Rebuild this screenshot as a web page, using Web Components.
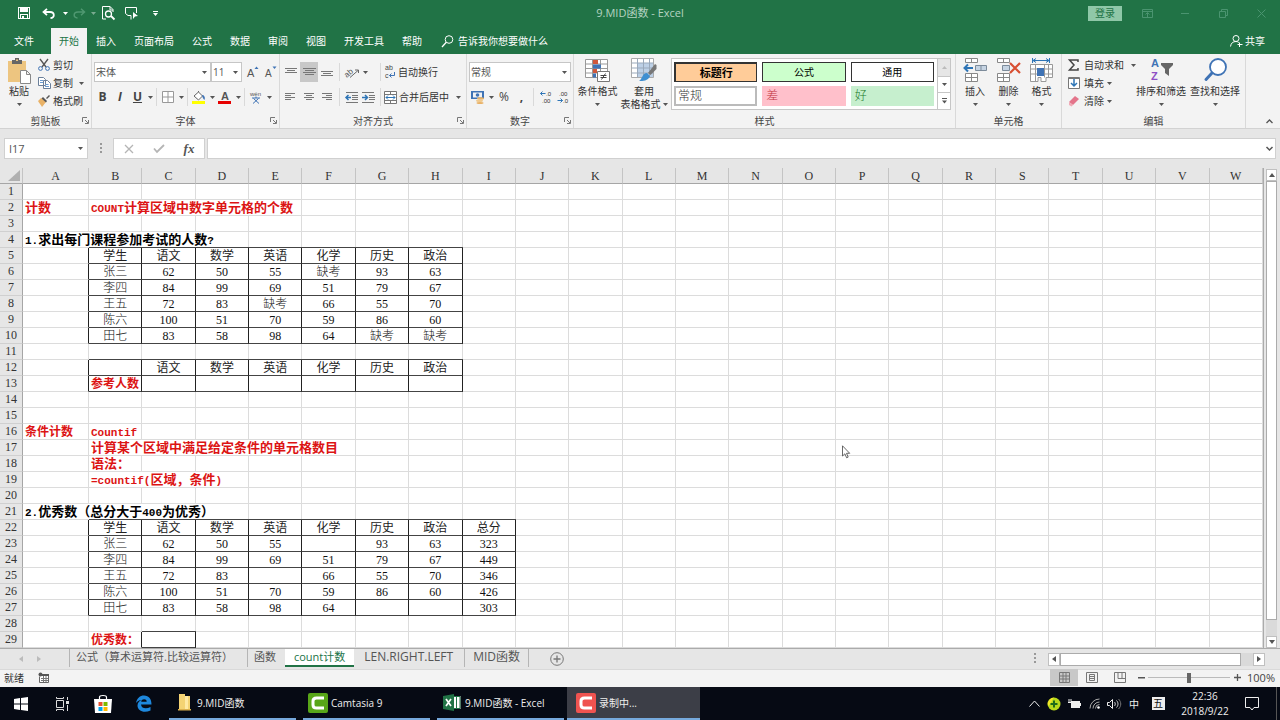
<!DOCTYPE html>
<html lang="zh-CN">
<head>
<meta charset="utf-8">
<meta name="viewport" content="width=device-width, initial-scale=1">
<title>9.MID函数 - Excel</title>
<style>
html, body { margin: 0; }
body { font: 10px/14px "Open Sans", "Noto Sans CJK SC", sans-serif; color: #333; background: #e6e6e6; }
</style>
</head>
<body>
<excel-app></excel-app>
<script>
const BASE = `
*, *::before { box-sizing: border-box; }
:host { display: block; box-sizing: border-box; }
button, input, select { font: inherit; color: inherit; margin: 0; padding: 0; border: 0; background: none; border-radius: 0; appearance: none; }
button { display: flex; align-items: center; justify-content: center; white-space: nowrap; }
:focus-visible { outline: 1px solid #217346; }
`;

function define(name, css, html, setup) {
  customElements.define(name, class extends HTMLElement {
    constructor() {
      super();
      const root = this.attachShadow({ mode: 'open' });
      root.innerHTML = `<style>${BASE}${css}</style>${html}`;
    }
    connectedCallback() { if (setup) setup(this, this.shadowRoot); }
  });
}

/* Each icon: [width, height, svg body] */
const G = 'stroke="#777" fill="none"';
const lines = (list) => `<path stroke="#777" d="${list.map(([x, y, w]) => `M${x} ${y}.5h${w}`).join('')}"/>`;
const ICONS = {
  caret: [5, 3, '<path fill="#555" d="M0 0h5L2.500 3z"/>'],
  caretw: [5, 3, '<path fill="#fff" d="M0 0h5L2.500 3z"/>'],
  launch: [7, 7, '<path stroke="#777" fill="none" d="M.5 5V.5H5M3 3l3 3M6.500 3v3.500H3"/>'],
  save: [12, 12, '<path fill="#fff" fill-rule="evenodd" d="M0 0h12v12H0zM1 1v10h1V7h8v4h1V1h-1v4H2V1zM3 8v3h1V9h2v2h3V8z"/>'],
  undo: [13, 11, '<path fill="none" stroke="#fff" stroke-width="1.800" d="M5 .8L1.500 4 5 7.200M2 4h6c5 0 5 6 .5 6"/>'],
  redo: [13, 11, '<path fill="none" stroke="#4f9871" stroke-width="1.500" d="M8 .8L11.500 4 8 7.200M11 4H5C0 4 0 10 4.500 10"/>'],
  preview: [13, 14, '<path fill="none" stroke="#fff" d="M4 13H.5V.5H8l3 3V6M8 .5V4h3"/><circle cx="6.500" cy="8" r="3" fill="none" stroke="#fff" stroke-width="1.300"/><path stroke="#fff" stroke-width="1.800" d="M9 10l3.500 3.500"/>'],
  touch: [14, 13, '<path fill="none" stroke="#fff" d="M6 8.500H3L.5 6.500V.5h11V6M6 8.500v4"/><path fill="#fff" d="M8 5l5 4-3 .5L8 12z"/>'],
  more: [5, 5, '<path fill="#fff" d="M0 0h5v1H0zM0 2h5L2.500 5z"/>'],
  ribbonopt: [11, 9, '<path fill="none" stroke="#4b9470" d="M.5 .5h10v8H.5zM.5 2.500h10M5.500 8V4M3.500 5.500l2-2 2 2"/>'],
  min: [8, 1, '<path stroke="#4b9470" d="M0 .5h8"/>'],
  restore: [9, 9, '<path fill="none" stroke="#4b9470" d="M.5 2.500h6v6h-6zM2.500 2V.5h6v6H7"/>'],
  close: [9, 9, '<path stroke="#4b9470" d="M.5 .5l8 8M8.500 .5l-8 8"/>'],
  search: [13, 13, '<circle cx="8" cy="4.500" r="3.800" fill="none" stroke="#fff"/><path stroke="#fff" stroke-width="1.300" d="M5.300 7.300L1 12"/>'],
  share: [13, 12, '<circle cx="6" cy="3.500" r="3" fill="none" stroke="#fff"/><path fill="none" stroke="#fff" d="M.5 11.500C1 8 3 6.500 6 6.500c1 0 2 .3 2.800 1M9.500 7.500v4.500M7.500 9.500h5"/>'],
  paste: [24, 26, '<path fill="#edc580" d="M1 3h18v21H1z"/><path fill="#666" d="M5 6V2h3V0h4v2h3v4z"/><path fill="#edc580" d="M9 1.500h2v1.500H9z"/><path fill="#fff" stroke="#888" d="M13.500 12.500h6l4 4v9h-10zM19.500 12.500v4h4"/>'],
  cut: [12, 12, '<path stroke="#555" stroke-width="1.300" fill="none" d="M2 0l6 8M10 0L4 8"/><circle cx="2.500" cy="9.500" r="1.900" fill="none" stroke="#3f73b5"/><circle cx="9.500" cy="9.500" r="1.900" fill="none" stroke="#3f73b5"/>'],
  copy: [13, 12, '<path fill="#fff" stroke="#6b7f99" d="M.5 .5h5l2 2v6h-7zM5.500 3.500h4l3 3v5h-7z"/><path stroke="#6b9bd1" d="M2 3.500h3M2 5.500h3M7 7.500h3.500M7 9.500h4"/>'],
  brush: [12, 12, '<path fill="#e9b267" d="M0 6l3-3 5 4-4 5c-1-2-3-4-4-6z"/><path fill="#555" d="M5 2l4 4-1 1.500L3.500 3.500zM8 3l3-3 1 1-3 3z"/>'],
  fontup: [12, 12, '<text x="0" y="11" font-size="11" fill="#555">A</text><path fill="#3f73b5" d="M7.500 3L9.500 .5l2 2.500z"/>'],
  fontdn: [12, 12, '<text x="0" y="11" font-size="10" fill="#555">A</text><path fill="#3f73b5" d="M7.500 .5h4L9.500 3z"/>'],
  border: [12, 12, '<path fill="#fff" stroke="#999" d="M.5 .5h11v11H.5zM6 .5v11M.5 6h11"/>'],
  fill: [14, 13, '<path fill="#fff" stroke="#666" d="M2 5l4.500-4 4 4-4 4zM6.500 1V0"/><path fill="#3f73b5" d="M10 4c2 0 3.500 2 2.500 5-1-1-2-2-2.500-5z"/><path fill="#ff0" d="M0 10h13v3H0z"/>'],
  color: [14, 13, '<text x="3" y="9" font-size="11" font-weight="600" fill="#555">A</text><path fill="#e60000" d="M0 10h13v3H0z"/>'],
  wen: [12, 13, '<text x="0" y="5" font-size="6" fill="#555">wén</text><path fill="none" stroke="#3f73b5" d="M2 7h8M6 5.500V7M3 12.500l5.500-5M9 12.500l-5.500-5"/>'],
  vtop: [13, 12, lines([[0, 2, 12], [2, 4, 8], [0, 6, 12]])],
  vmid: [13, 12, lines([[0, 2, 13], [2, 4, 9], [0, 6, 13], [2, 8, 9]])],
  vbot: [13, 12, lines([[0, 5, 12], [2, 7, 8], [0, 9, 12]])],
  left: [12, 10, lines([[0, 1, 10], [0, 3, 6], [0, 5, 10], [0, 7, 6]])],
  center: [12, 10, lines([[1, 1, 10], [3, 3, 6], [1, 5, 10], [3, 7, 6]])],
  right: [12, 10, lines([[1, 1, 10], [5, 3, 6], [1, 5, 10], [5, 7, 6]])],
  orient: [13, 12, '<text x="-1" y="9" font-size="8" fill="#555" transform="rotate(-40 4 8)">ab</text><path fill="none" stroke="#666" d="M4 11.500l8-7M9 4h3.500v3"/>'],
  outdent: [13, 11, '<path stroke="#777" d="M1 .5h12M7 3.500h6M7 5.500h6M7 7.500h6M1 10.500h12"/><path stroke="#2e75b6" stroke-width="1.500" fill="none" d="M6 5.500H1M3.500 3L1 5.500 3.500 8"/>'],
  indent: [13, 11, '<path stroke="#777" d="M0 .5h12M7 3.500h6M7 5.500h6M7 7.500h6M0 10.500h12"/><path stroke="#2e75b6" stroke-width="1.500" fill="none" d="M0 5.500h5M3 3l2.500 2.500L3 8"/>'],
  wrap: [12, 12, '<text x="1" y="4" font-size="7" fill="#444">ab</text><text x="1" y="12" font-size="7" fill="#444">c</text><path stroke="#3f73b5" fill="none" d="M10.500 6v3.500H5.500M7.500 7.500l-2 2 2 2"/>'],
  merge: [13, 13, '<path fill="#fff" stroke="#777" d="M.5 .5h12v12H.5zM.5 3.500h12M.5 9.500h12M6.500 .5v3M6.500 9.500v3"/><path stroke="#2e75b6" fill="none" d="M2 6.500h9M4 4.500l-2 2 2 2M9 4.500l2 2-2 2"/>'],
  money: [14, 13, '<path fill="#3f73b5" fill-rule="evenodd" d="M0 0h13v8H0zM2 1.500v5h9v-5z"/><circle cx="6.500" cy="4" r="1.800" fill="#3f73b5"/><ellipse cx="9.500" cy="7.500" rx="3.500" ry="1.200" fill="#e9b267"/><ellipse cx="8.500" cy="9.800" rx="3.500" ry="1.200" fill="#f0c98d"/><ellipse cx="9" cy="12" rx="3.500" ry="1" fill="#e9b267"/>'],
  incdec: [12, 12, '<path stroke="#2e75b6" fill="none" d="M5.500 2.500H.5M2.500 .5l-2 2 2 2"/><text x="6" y="5" font-size="6" fill="#333">.0</text><text x="2" y="12" font-size="6" fill="#333">.00</text>'],
  decdec: [12, 12, '<path stroke="#2e75b6" fill="none" d="M.5 9.500h5M3.500 7.500l2 2-2 2"/><text x="2" y="5" font-size="6" fill="#333">.00</text><text x="6" y="12" font-size="6" fill="#333">.0</text>'],
  cond: [26, 25, '<path fill="#fff" stroke="#999" d="M.5 1.500h22v18H.5zM.5 6h22M.5 10.500h22M.5 15h22M7.500 1.500v18M15.500 1.500v18"/><path fill="#d0583b" d="M8 2h5v4H8zM8 11h4v4H8z"/><path fill="#3f73b5" d="M8 6.500h8v4H8zM8 15.500h3v4H8z"/><path fill="#fff" stroke="#777" d="M12.500 13.500h12v10h-12z"/><path stroke="#444" d="M15.500 17.500h6M15.500 19.500h6M20.500 15.500l-4 6"/>'],
  tablefmt: [26, 25, '<path fill="#fff" stroke="#aaa" d="M.5 .5h22v19H.5z"/><path fill="#bdd0e6" d="M6 5h16v14H6z"/><path stroke="#9aa9bb" d="M.5 5h22M.5 10h22M.5 15h22M6.500 .5v19M12.500 .5v19M18.500 .5v19"/><path fill="#777" d="M17 15l7-9 1.500 1v4l-6 6z"/><path fill="#3f8fd1" d="M8 23c3-1 3-8 8-8l3 3c-2 5-7 5-11 5z"/>'],
  gup: [5, 3, '<path fill="#bbb" d="M0 3h5L2.500 0z"/>'],
  gmore: [7, 6, '<path fill="#555" d="M1 0h5v1H1zM1 2.500h5L3.500 5.500z"/>'],
  insert: [24, 24, '<path fill="#fff" stroke="#888" d="M2.500 .5h12v4h-12zM8.500 .5v4M2.500 15.500h12v8h-12zM8.500 15.500v8M2.500 19.500h12"/><path fill="#c6d4e3" stroke="#7c8b9a" d="M12.500 7.500h11v5h-11zM18 7.500v5"/><path stroke="#2e75b6" stroke-width="2" fill="none" d="M10 10H2M5 6.500L1.500 10 5 13.500"/>'],
  remove: [24, 24, '<path fill="#fff" stroke="#888" d="M.5 .5h12v4H.5zM6.500 .5v4M.5 15.500h12v8H.5zM6.500 15.500v8M.5 19.500h12"/><path fill="#c6d4e3" stroke="#7c8b9a" d="M5.500 7.500h7v5h-7z"/><path stroke="#d84f32" stroke-width="2.200" fill="none" d="M13 5l10 10M23 5L13 15"/>'],
  format: [24, 25, '<path stroke="#2e75b6" fill="none" d="M2.500 0v5M19.500 0v5M3 2.500h16M6 .5l-3 2 3 2M16 .5l3 2-3 2"/><path fill="#fff" stroke="#999" d="M.5 6.500h22v13H16v4h-5v-4H8v4H.5zM.5 11h22M.5 16h22M5.500 6.500v17M14.500 6.500v13M18.500 6.500v13"/><path fill="#3f73b5" d="M7 10h7v8H7z"/>'],
  sum: [11, 12, '<path stroke="#444" stroke-width="1.500" fill="none" d="M10 3V1H1.500l4.500 5-4.500 5H10V9"/>'],
  filldown: [12, 12, '<path fill="#fff" stroke="#777" d="M.5 .5h11v11H.5z"/><path stroke="#2e75b6" stroke-width="1.500" fill="none" d="M6 2v7M3 6l3 3 3-3"/><path stroke="#777" d="M1 1.500h10"/>'],
  eraser: [12, 12, '<path fill="#e4758b" d="M1 7l6-6 4 3-6 6z"/><path fill="#f0a9b6" d="M1 7l4 3-1.500 1.500L1 10z"/>'],
  sort: [25, 24, '<text x="2" y="9" font-size="11" font-weight="bold" fill="#3f73b5">A</text><text x="2" y="22" font-size="11" font-weight="bold" fill="#8e4fc4">Z</text><path fill="#666" d="M12 5h12v2l-4 4v7l-4-3v-4l-4-4z"/>'],
  find: [25, 24, '<circle cx="15" cy="9" r="8" fill="#fff" stroke="#3f73b5" stroke-width="1.800"/><path stroke="#3f73b5" stroke-width="3" stroke-linecap="round" d="M9 15l-6 6.500"/>'],
  up: [7, 5, '<path fill="none" stroke="#555" stroke-width="1.300" d="M.5 4l3-3 3 3"/>'],
  chev: [7, 5, '<path fill="none" stroke="#555" stroke-width="1.500" d="M.5 1l3 3 3-3"/>'],
  x: [10, 10, '<path stroke="#b5b5b5" stroke-width="1.300" d="M1 1l8 8M9 1L1 9"/>'],
  check: [12, 9, '<path fill="none" stroke="#b5b5b5" stroke-width="1.800" d="M1 4.500L4 8l7-7"/>'],
  dots: [2, 10, '<path fill="#999" d="M0 0h2v2H0zM0 4h2v2H0zM0 8h2v2H0z"/>'],
  corner: [12, 11, '<path fill="#b0b0b0" d="M12 0v11H0z"/>'],
  tu: [6, 4, '<path fill="#555" d="M0 4h6L3 0z"/>'],
  td: [6, 4, '<path fill="#555" d="M0 0h6L3 4z"/>'],
  tl: [4, 6, '<path fill="#555" d="M4 0v6L0 3z"/>'],
  tr: [4, 6, '<path fill="#555" d="M0 0v6l4-3z"/>'],
  tlg: [4, 6, '<path fill="#bbb" d="M4 0v6L0 3z"/>'],
  trg: [4, 6, '<path fill="#bbb" d="M0 0v6l4-3z"/>'],
  plus: [14, 14, '<circle cx="7" cy="7" r="6.300" fill="none" stroke="#777"/><path stroke="#777" stroke-width="1.300" d="M3.500 7h7M7 3.500v7"/>'],
  macro: [11, 11, `<path fill="#fff" stroke="#666" d="M2.500 2.500h8v8h-9v-6"/><circle cx="2.500" cy="2.500" r="2" fill="#555"/><path fill="#555" d="M4 2h7v2H4z"/><path stroke="#777" d="M3 6.500h7M3 8.500h7M5.500 4v6M8 4v6"/>`],
  vnormal: [11, 11, `<path ${G} d="M.5 .5h10v10H.5zM.5 4h10M.5 7h10M4 .5v10M7 .5v10"/>`],
  vlayout: [12, 11, `<path ${G} d="M.5 .5h11v10H.5zM3.500 2.500h5v6h-5zM4 4.500h4M4 6.500h4"/>`],
  vbreak: [12, 11, `<path ${G} d="M.5 .5h11v10H.5zM4 .5v6h4v-6M8 6.500h3"/>`],
  minus: [7, 2, '<path fill="#555" d="M0 0h7v1.500H0z"/>'],
  zplus: [7, 7, '<path stroke="#555" stroke-width="1.300" d="M0 3.500h7M3.500 0v7"/>'],
  win: [14, 14, '<path fill="#fff" d="M0 2l6-1v5.500H0zM7 .9L14 0v6.500H7zM0 7.500h6V13l-6-1zM7 7.500h7V14l-7-1z"/>'],
  taskview: [14, 14, '<path fill="none" stroke="#ddd" d="M1.500 3.500h7v7h-7zM1.500 0v1.500h7V0M1.500 14v-1.500h7V14M12.500 0v3M12.500 8v6"/><path fill="#ddd" d="M11 4h3v3h-3z"/>'],
  store: [20, 20, '<path fill="none" stroke="#fff" stroke-width="1.200" d="M6.500 6V3C6.500 1 13.500 1 13.500 3v3"/><path fill="#fff" d="M1 5h18l-1 14H2z"/><path fill="#e8502f" d="M5.500 8h4v4h-4z"/><path fill="#7fba00" d="M10.500 8h4v4h-4z"/><path fill="#00a4ef" d="M5.500 13h4v4h-4z"/><path fill="#ffb900" d="M10.500 13h4v4h-4z"/>'],
  edge: [17, 17, '<path fill="#1e88dd" fill-rule="evenodd" d="M1 8C2 3 5 .5 9 .5c5 0 7.500 3.500 7.500 9H6c.5 4 5 5 9.500 2.500V15.500C9 18.500 2.500 16 2.500 10.500c0-3 2-4.500 4-5.500C4 5 2 6.500 1 8zM6.200 6.700h5.500C11.700 3.500 6.600 3.500 6.200 6.700z"/>'],
  folder: [13, 17, '<path fill="#f4d373" d="M1 0h6v2h5v13H1z"/><path fill="#ffe9a3" d="M7 2h3v14H7z"/><path fill="#dcb14d" d="M0 15h13v1.500H0z"/>'],
  camg: [20, 20, '<rect width="20" height="20" rx="2" fill="#58a618"/><path fill="none" stroke="#fff" stroke-width="3" d="M16 5H8.500C6 5 5 6 5 8v4c0 2 1 3 3.500 3H16"/>'],
  camr: [20, 20, '<rect width="20" height="20" rx="2" fill="#ef5350"/><path fill="none" stroke="#fff" stroke-width="3" d="M16 5H8.500C6 5 5 6 5 8v4c0 2 1 3 3.500 3H16"/>'],
  xl: [18, 17, '<path fill="#fff" d="M9 2h8.500v13H9z"/><path stroke="#217346" fill="none" d="M10 2.500h7v12h-7M13.500 3v11"/><path fill="#217346" d="M0 2l11-2v17L0 15z"/><path stroke="#fff" stroke-width="1.700" d="M3 5l5 7M8 5l-5 7"/>'],
  tup: [11, 7, '<path fill="none" stroke="#eee" d="M.5 6.500l5-5.500 5 5.500"/>'],
  guard: [14, 14, '<circle cx="7" cy="7" r="6.500" fill="#b8d91c"/><path fill="#f3e62a" d="M1 9a6.500 6.500 0 0 1 6-8.500C4 4 5 6 1 9z"/><path stroke="#1f6b1a" stroke-width="2" d="M3.500 7h7M7 3.500v7"/>'],
  battery: [13, 9, '<path fill="#eee" d="M3 2h9v2h1v3h-1v2H3z"/><path fill="none" stroke="#eee" d="M1 0v3M3 0v3M0 3.500h4"/>'],
  wifi: [11, 11, '<path fill="none" stroke="#aaa" d="M1 10.500A9.500 9.500 0 0 1 10.500 1M4 10.500A6.500 6.500 0 0 1 10.500 4M6.500 10.500a4 4 0 0 1 4-4"/><circle cx="9.500" cy="9.500" r="1.300" fill="#fff"/>'],
  sound: [14, 12, '<path fill="none" stroke="#eee" d="M.5 4.500h2l3-3v9l-3-3h-2z"/><path fill="none" stroke="#ccc" d="M7.500 4c1 1 1 3 0 4M9.500 2.500c2 2 2 5 0 7"/><path fill="none" stroke="#777" d="M11.500 1c3 3 3 7 0 10"/>'],
  action: [14, 14, '<path fill="none" stroke="#eee" d="M.5 .5h13v10H9l-2 2.500-2-2.500H.5z"/>'],
  pointer: [9, 14, '<path fill="#fff" stroke="#444" stroke-width=".8" d="M.5 .8v10.200l2.400-2.200 1.700 4 1.600-.7-1.700-3.800h3.200z"/>'],
};

customElements.define('ui-icon', class extends HTMLElement {
  constructor() { super(); this.attachShadow({ mode: 'open' }); }
  connectedCallback() {
    const [w, h, body] = ICONS[this.getAttribute('name')];
    this.shadowRoot.innerHTML = `<style>:host{display:inline-flex;flex:none}svg{display:block;font-family:"Liberation Sans",sans-serif;overflow:visible}</style>
      <svg width="${w}" height="${h}" viewBox="0 0 ${w} ${h}" aria-hidden="true">${body}</svg>`;
  }
});
const ic = (n) => `<ui-icon name="${n}"></ui-icon>`;

define('title-bar', `
  :host { display: grid; grid-template-columns: 1fr auto 1fr; align-items: center; height: 28px; padding-bottom: 2px; background: #217346; color: #b5d3c2; font-size: 11px; }
  .quick { display: flex; align-items: center; padding-left: 14px; }
  .quick button { height: 24px; }
  .w20 { width: 20px; } .w25 { width: 25px; } .w8 { width: 8px; } .w22 { width: 22px; }
  .dim { opacity: .4; }
  .win { display: flex; align-items: center; justify-content: flex-end; }
  .win button { width: 38px; height: 24px; }
  .win .login { width: 34px; height: 15px; margin-right: 6px; background: #8fc7a8; color: #217346; font-size: 10px; }
`, `
  <div class="quick">
    <button class="w20" aria-label="保存">${ic('save')}</button>
    <button class="w25" aria-label="撤消" style="margin-left:2px">${ic('undo')}</button><button class="w8" aria-label="撤消列表">${ic('caretw')}</button>
    <button class="w20" aria-label="恢复">${ic('redo')}</button><button class="w8 dim" aria-label="恢复列表">${ic('caretw')}</button>
    <button class="w22" aria-label="打印预览">${ic('preview')}</button>
    <button class="w25" aria-label="触摸/鼠标模式">${ic('touch')}</button>
    <button class="w22" aria-label="自定义快速访问工具栏">${ic('more')}</button>
  </div>
  <div>9.MID函数 - Excel</div>
  <div class="win">
    <button class="login">登录</button>
    <button aria-label="功能区显示选项">${ic('ribbonopt')}</button>
    <button aria-label="最小化">${ic('min')}</button>
    <button aria-label="还原">${ic('restore')}</button>
    <button aria-label="关闭">${ic('close')}</button>
  </div>`);

define('ribbon-tabs', `
  :host { display: flex; align-items: stretch; height: 26px; padding-right: 15px; background: #217346; color: #fff; }
  nav { display: flex; padding-left: 5px; }
  nav button { padding: 0 9px; }
  nav .file { padding-right: 17px; }
  nav .on { padding: 0 8px; background: #f3f3f3; color: #217346; }
  .tell { gap: 4px; margin-left: 10px; }
  .share { gap: 2px; margin-left: auto; }
`, `
  <nav aria-label="功能区选项卡">
    <button class="file">文件</button><button class="on">开始</button><button>插入</button><button>页面布局</button><button>公式</button><button>数据</button><button>审阅</button><button>视图</button><button>开发工具</button><button>帮助</button>
  </nav>
  <button class="tell">${ic('search')}告诉我你想要做什么</button>
  <button class="share">${ic('share')}共享</button>`);

define('ribbon-group', `
  :host { display: flex; flex-direction: column; flex: none; border-right: 1px solid #d9d9d9; }
  .body { display: flex; flex: 1; min-height: 0; padding: 0 2px; }
  footer { display: grid; grid-template-columns: 12px 1fr 12px; align-items: center; height: 15px; text-align: center; color: #444; }
`, `<div class="body"><slot></slot></div><footer><span></span><span class="name"></span><button></button></footer>`,
(el, root) => {
  root.querySelector('.name').textContent = el.getAttribute('label');
  const b = root.querySelector('button');
  if (el.hasAttribute('launcher')) { b.innerHTML = ic('launch'); b.setAttribute('aria-label', el.getAttribute('label') + '设置'); }
  else b.remove();
});

define('big-button', `
  button { flex-direction: column; justify-content: flex-start; width: 100%; height: 58px; padding-top: 4px; line-height: 13px; }
  .pic { height: 27px; display: flex; justify-content: center; }
  .drop { display: flex; justify-content: center; height: 12px; align-items: center; }
  :host([inline]) .drop { display: none; }
  .two { display: none; align-items: center; gap: 2px; }
  :host([inline]) .two { display: flex; }
`, `<button><span class="pic"></span><span class="t"></span><span class="two"></span><span class="drop">${ic('caret')}</span></button>`,
(el, root) => {
  root.querySelector('.pic').innerHTML = ic(el.getAttribute('icon'));
  root.querySelector('.t').textContent = el.getAttribute('label');
  if (el.hasAttribute('inline')) root.querySelector('.two').innerHTML = el.getAttribute('inline') + ic('caret');
});

define('drop-down', `
  :host { display: block; position: relative; height: 20px; border: 1px solid #c6c6c6; background: #fff; color: #555; }
  select { width: 100%; height: 18px; padding-left: 1px; }
  ui-icon { position: absolute; right: 3px; top: 8px; pointer-events: none; }
`, `<select></select>${ic('caret')}`,
(el, root) => {
  const s = root.querySelector('select');
  s.innerHTML = `<option>${el.getAttribute('value')}</option>`;
  s.setAttribute('aria-label', el.getAttribute('label'));
});

define('excel-ribbon', `
  :host { display: flex; height: 75px; background: #f3f3f3; border-bottom: 1px solid #d2d2d2; }
  .rows { display: flex; flex-direction: column; padding-top: 8px; gap: 5px; flex: 1; }
  .row { display: flex; align-items: center; height: 20px; }
  .row button { height: 20px; }
  .b { width: 18px; } .c { width: 8px; } .n { width: 17px; }
  .gap2 { gap: 2px; }
  .sep { width: 1px; height: 18px; margin: 0 3px; background: #d9d9d9; }
  .tight .sep { margin: 0 2px; }
  .on { background: #c8c8c8; }
  .glyph { font-size: 12px; color: #444; }
  .small { display: flex; flex-direction: column; padding: 2px 0 0 2px; }
  .small button { justify-content: flex-start; gap: 2px; height: 18px; }
  .edit { width: 70px; padding-left: 4px; }
  .edit button { gap: 3px; }
  .small ui-icon:first-child { width: 13px; }
  .small .d { margin-left: 4px; }
  .g1 { width: 92px; } .g2 { width: 188px; } .g3 { width: 187px; } .g4 { width: 107px; } .g5 { flex: 1; } .g6 { width: 106px; } .g7 { width: 184px; }
  .gallery { flex: 1; display: grid; grid-template-columns: 1fr 13px; height: 52px; margin: 4px 2px 0; border: 1px solid #c6c6c6; background: #fff; }
  .tiles { display: grid; grid-template-columns: repeat(3, 1fr); grid-template-rows: 20px 20px; gap: 4px 5px; padding: 3px 3px 0 2px; }
  .tiles button { color: #000; border: 1px solid #333; }
  .tiles .head { background: #ffcc99; font-size: 11px; font-weight: bold; border-width: 2px 1px 1px 2px; }
  .tiles .calc { background: #ccffcc; }
  .tiles .txt { justify-content: flex-start; padding-left: 3px; font-size: 12px; font-weight: 300; border-color: transparent; }
  .tiles .norm { border: 2px solid #bbb; color: #333; padding-left: 2px; }
  .tiles .bad { background: #ffc0cb; color: #c0303d; } .tiles .good { background: #c6efce; color: #1c7a2a; }
  .scroll { display: grid; grid-template-rows: 1fr 1fr 1fr; border-left: 1px solid #c6c6c6; }
  .scroll button + button { border-top: 1px solid #c6c6c6; }
  .scroll button:first-child { background: #e6e6e6; }
  .end { width: 34px; display: flex; align-items: flex-end; justify-content: center; padding: 0 0 4px 12px; }
`, `
  <ribbon-group class="g1" label="剪贴板" launcher>
    <big-button icon="paste" label="粘贴" style="width:34px"></big-button>
    <div class="small">
      <button>${ic('cut')}剪切</button>
      <button>${ic('copy')}复制<ui-icon class="d" name="caret"></ui-icon></button>
      <button>${ic('brush')}格式刷</button>
    </div>
  </ribbon-group>
  <ribbon-group class="g2" label="字体" launcher>
    <div class="rows">
      <div class="row">
        <drop-down value="宋体" label="字体" style="width:117px"></drop-down><drop-down value="11" label="字号" style="width:31px;margin-right:2px"></drop-down>
        <button class="b" aria-label="增大字号">${ic('fontup')}</button><button class="b" aria-label="减小字号">${ic('fontdn')}</button>
      </div>
      <div class="row tight">
        <button class="n glyph" aria-label="加粗"><b>B</b></button><button class="b glyph" aria-label="倾斜"><i><b>I</b></i></button><button class="n glyph" aria-label="下划线"><u><b>U</b></u></button><button class="c" aria-label="下划线样式">${ic('caret')}</button>
        <span class="sep"></span>
        <button class="b" aria-label="边框">${ic('border')}</button><button class="c" aria-label="边框样式">${ic('caret')}</button>
        <span class="sep"></span>
        <button class="b" aria-label="填充颜色">${ic('fill')}</button><button class="c" aria-label="填充颜色列表">${ic('caret')}</button>
        <button class="b" aria-label="字体颜色">${ic('color')}</button><button class="c" aria-label="字体颜色列表">${ic('caret')}</button>
        <span class="sep"></span>
        <button class="b" aria-label="拼音">${ic('wen')}</button><button class="c" aria-label="拼音选项">${ic('caret')}</button>
      </div>
    </div>
  </ribbon-group>
  <ribbon-group class="g3" label="对齐方式" launcher>
    <div class="rows">
      <div class="row">
        <button class="b" aria-label="顶端对齐">${ic('vtop')}</button><button class="b on" aria-label="垂直居中">${ic('vmid')}</button><button class="b" aria-label="底端对齐">${ic('vbot')}</button>
        <span class="sep"></span>
        <button class="b" aria-label="方向">${ic('orient')}</button><button class="c" aria-label="方向列表">${ic('caret')}</button>
        <span style="width:8px"></span><span class="sep"></span>
        <button class="gap2">${ic('wrap')}自动换行</button>
      </div>
      <div class="row">
        <button class="b" aria-label="左对齐">${ic('left')}</button><button class="b" aria-label="居中">${ic('center')}</button><button class="b" aria-label="右对齐">${ic('right')}</button>
        <span class="sep"></span>
        <button class="n" aria-label="减少缩进量">${ic('outdent')}</button><button class="n" aria-label="增加缩进量">${ic('indent')}</button>
        <span class="sep"></span>
        <button class="gap2">${ic('merge')}合并后居中</button><button class="b" aria-label="合并选项">${ic('caret')}</button>
      </div>
    </div>
  </ribbon-group>
  <ribbon-group class="g4" label="数字" launcher>
    <div class="rows">
      <drop-down value="常规" label="数字格式" style="width:102px"></drop-down>
      <div class="row">
        <button class="b" aria-label="会计数字格式">${ic('money')}</button><button class="c" aria-label="货币列表">${ic('caret')}</button>
        <button class="b glyph" aria-label="百分比样式">%</button><button class="n glyph" aria-label="千位分隔样式"><b>,</b></button>
        <span class="sep"></span>
        <button class="n" aria-label="增加小数位数">${ic('incdec')}</button><button class="n" aria-label="减少小数位数">${ic('decdec')}</button>
      </div>
    </div>
  </ribbon-group>
  <ribbon-group class="g5" label="样式">
    <big-button icon="cond" label="条件格式" style="width:43px"></big-button>
    <big-button icon="tablefmt" label="套用" inline="表格格式" style="width:50px"></big-button>
    <div class="gallery">
      <div class="tiles">
        <button class="head">标题行</button><button class="calc">公式</button><button>通用</button>
        <button class="txt norm">常规</button><button class="txt bad">差</button><button class="txt good">好</button>
      </div>
      <div class="scroll"><button aria-label="上一行">${ic('gup')}</button><button aria-label="下一行">${ic('caret')}</button><button aria-label="其他">${ic('gmore')}</button></div>
    </div>
  </ribbon-group>
  <ribbon-group class="g6" label="单元格">
    <big-button icon="insert" label="插入" style="width:34px"></big-button>
    <big-button icon="remove" label="删除" style="width:33px"></big-button>
    <big-button icon="format" label="格式" style="width:33px"></big-button>
  </ribbon-group>
  <ribbon-group class="g7" label="编辑">
    <div class="small edit">
      <button>${ic('sum')}自动求和<ui-icon class="d" name="caret"></ui-icon></button>
      <button>${ic('filldown')}填充<ui-icon name="caret"></ui-icon></button>
      <button>${ic('eraser')}清除<ui-icon name="caret"></ui-icon></button>
    </div>
    <big-button icon="sort" label="排序和筛选" style="width:54px"></big-button>
    <big-button icon="find" label="查找和选择" style="width:54px"></big-button>
  </ribbon-group>
  <button class="end" aria-label="折叠功能区">${ic('up')}</button>`);

define('formula-bar', `
  :host { display: flex; align-items: center; height: 39px; padding: 0 4px; background: #e6e6e6; }
  .name { display: flex; align-items: center; width: 84px; height: 21px; padding: 0 4px; background: #fff; border: 1px solid #d0d0d0; }
  .name input { flex: 1; min-width: 0; color: #555; font-size: 11px; }
  .grip { width: 25px; text-align: center; }
  .tools { display: flex; height: 21px; background: #fff; border: 1px solid #d0d0d0; margin-right: 2px; }
  .tools button { width: 30px; height: 19px; }
  .fx { font: italic bold 13px/19px "Liberation Serif", serif; color: #555; }
  .value { flex: 1; display: flex; align-items: center; height: 21px; background: #fff; border: 1px solid #d0d0d0; }
  .value input { flex: 1; height: 19px; }
  .value button { width: 12px; height: 19px; }
`, `
  <div class="name"><input aria-label="名称框" value="I17"><button aria-label="名称列表">${ic('caret')}</button></div>
  <span class="grip">${ic('dots')}</span>
  <div class="tools"><button aria-label="取消">${ic('x')}</button><button aria-label="输入">${ic('check')}</button><button class="fx" aria-label="插入函数">fx</button></div>
  <div class="value"><input aria-label="编辑栏"><button aria-label="展开编辑栏">${ic('chev')}</button></div>`);

/* Worksheet content: rows keyed by number, cells as [column, text, kind, span] */
const COLS = 'ABCDEFGHIJKLMNOPQRSTUVW'.split('');
const SUBJECTS = ['语文', '数学', '英语', '化学', '历史', '政治'];
const fromB = (list, kind = 'num') => list.map((t, i) => [COLS[i + 1], t, kind]);
const CELLS = {
  2: [['A', '计数', 'red'], ['B', 'COUNT计算区域中数字单元格的个数', 'red', 4]],
  4: [['A', '1.求出每门课程参加考试的人数?', 'bold', 4]],
  5: fromB(['学生', ...SUBJECTS], 'num head'),
  6: fromB(['张三', 62, 50, 55, '缺考', 93, 63]),
  7: fromB(['李四', 84, 99, 69, 51, 79, 67]),
  8: fromB(['王五', 72, 83, '缺考', 66, 55, 70]),
  9: fromB(['陈六', 100, 51, 70, 59, 86, 60]),
  10: fromB(['田七', 83, 58, 98, 64, '缺考', '缺考']),
  12: fromB(['', ...SUBJECTS], 'num head'),
  13: [['B', '参考人数', 'red fit']],
  16: [['A', '条件计数', 'red fit'], ['B', 'Countif', 'red']],
  17: [['B', '计算某个区域中满足给定条件的单元格数目', 'red', 5]],
  18: [['B', '语法：', 'red']],
  19: [['B', '=countif(区域，条件)', 'red', 3]],
  21: [['A', '2.优秀数（总分大于400为优秀）', 'bold', 4]],
  22: fromB(['学生', ...SUBJECTS, '总分'], 'num head'),
  23: fromB(['张三', 62, 50, 55, '', 93, 63, 323]),
  24: fromB(['李四', 84, 99, 69, 51, 79, 67, 449]),
  25: fromB(['王五', 72, 83, '', 66, 55, 70, 346]),
  26: fromB(['陈六', 100, 51, 70, 59, 86, 60, 426]),
  27: fromB(['田七', 83, 58, 98, 64, '', '', 303]),
  29: [['B', '优秀数：', 'red fit']],
};
/* Outlined ranges: [first row, last row, first column index, last column index] */
const BOXES = [[5, 10, 1, 7], [12, 13, 1, 7], [22, 27, 1, 8], [29, 29, 2, 2]];
const boxed = (r, c) => BOXES.some(([a, b, x, y]) => r >= a && r <= b && c >= x && c <= y);

function sheetRows() {
  let out = '';
  for (let r = 1; r <= 29; r++) {
    out += `<tr><th scope="row">${r}</th>`;
    for (let c = 0; c < COLS.length; c++) {
      const [, text = '', kind = '', span = 1] = (CELLS[r] || []).find(([col]) => col === COLS[c]) || [];
      const last = c + span - 1;
      const cls = [kind];
      if (boxed(r, last) || boxed(r, last + 1)) cls.push('br');
      if (boxed(r, c)) cls.push('bb');
      if (boxed(r, c) && !boxed(r - 1, c)) cls.push('bt');
      const html = kind === 'red' || kind === 'bold'
        ? text.replace(/[\x21-\x7e]+/g, (m) => `<span>${m}</span>`) : text;
      out += `<td class="${cls.join(' ').trim()}"${span > 1 ? ` colspan="${span}"` : ''}>${html}</td>`;
      c = last;
    }
    out += '</tr>';
  }
  return out;
}

define('sheet-grid', `
  :host { display: grid; grid-template-columns: 1fr 17px; flex: 1; position: relative; background: #e6e6e6; }
  table { width: 100%; table-layout: fixed; border-spacing: 0; background: #fff; align-self: start; font: 12px/14px "Liberation Serif", "Noto Sans CJK SC", serif; color: #333; }
  th, td { height: 16px; padding: 0; border: solid #dcdcdc; border-width: 0 1px 1px 0; white-space: nowrap; line-height: 14px; }
  th { background: #e6e6e6; font-weight: normal; border-color: #c4c4c4; }
  thead th { border-bottom-color: #a6a6a6; }
  tbody th { border-right-color: #a6a6a6; border-bottom-color: #d0d0d0; line-height: 15px; }
  .rowcol { width: 23px; } .first { width: 66px; }
  .corner ui-icon { display: flex; justify-content: flex-end; padding-right: 2px; }
  .num { text-align: center; font-weight: 300; color: #111; }
  .head { font-weight: normal; color: #222; }
  .red, .bold { padding-left: 2px; font-size: 13px; font-weight: bold; }
  .fit { font-size: 12px; }
  .red { color: #dc1414; } .bold { color: #000; }
  .red span, .bold span { font: bold 11px/10px "Liberation Mono", monospace; }
  .br { border-right-color: #222; } .bb { border-bottom-color: #444; } .bt { box-shadow: 0 -1px #444; }
  .bar { display: flex; flex-direction: column; padding: 1px 3px 0 2px; border-left: 1px solid #ababab; }
  .bar button { height: 12px; background: #fff; border: 1px solid #c0c0c0; }
  .track { flex: 1; background: #dadada; padding-bottom: 16px; display: flex; }
  .thumb { flex: 1; background: #fff; border: 1px solid #ababab; }
  .pointer { position: absolute; left: 842px; top: 277px; }
`, `
  <table>
    <colgroup><col class="rowcol"><col class="first">${'<col>'.repeat(22)}</colgroup>
    <thead><tr><th class="corner" aria-label="全选">${ic('corner')}</th>${COLS.map((c) => `<th scope="col">${c}</th>`).join('')}</tr></thead>
    <tbody>${sheetRows()}</tbody>
  </table>
  <div class="bar"><button aria-label="向上滚动">${ic('tu')}</button><div class="track"><div class="thumb"></div></div><button aria-label="向下滚动">${ic('td')}</button></div>
  <ui-icon class="pointer" name="pointer"></ui-icon>`);

define('sheet-tabs', `
  :host { display: flex; height: 21px; padding-right: 15px; border-top: 1px solid #ababab; background: #e6e6e6; color: #555; font-size: 11px; }
  .nav { display: flex; width: 69px; padding-left: 12px; }
  .nav button { width: 18px; }
  .tab { height: 18px; align-self: flex-start; padding: 0 8px 2px; border-right: 1px solid #b5b5b5; }
  .long { padding: 0 14px 2px 6px; border-left: 1px solid #b5b5b5; }
  .short { padding: 0 9px 2px 6px; border-right: 0; }
  .tab.on { padding: 0 9px; background: #fff; color: #217346; border: 0; border-bottom: 2px solid #217346; }
  .latin { font-size: 12px; }
  .wide { padding: 0 11px 2px 10px; }
  .add { width: 56px; }
  .scroll { display: flex; align-items: center; margin-left: auto; width: 231px; }
  .scroll button { width: 12px; height: 13px; background: #fff; border: 1px solid #c0c0c0; }
  .grip { width: 14px; }
  .track { flex: 1; height: 13px; padding-right: 12px; background: #dadada; }
  .thumb { height: 13px; background: #fff; border: 1px solid #ababab; }
`, `
  <div class="nav"><button aria-label="上一张工作表">${ic('tlg')}</button><button aria-label="下一张工作表">${ic('trg')}</button></div>
  <button class="tab long">公式（算术运算符.比较运算符）</button><button class="tab short">函数</button><button class="tab on">count计数</button><button class="tab latin wide">LEN.RIGHT.LEFT</button><button class="tab latin">MID函数</button>
  <button class="add" aria-label="新工作表">${ic('plus')}</button>
  <div class="scroll"><span class="grip">${ic('dots')}</span><button aria-label="向左滚动">${ic('tl')}</button><div class="track"><div class="thumb"></div></div><button aria-label="向右滚动">${ic('tr')}</button></div>`);

define('status-bar', `
  :host { display: flex; align-items: center; height: 18px; padding: 0 5px 2px 4px; background: #f3f3f3; border-top: 1px solid #d9d9d9; }
  .macro { margin-left: 14px; }
  .view { margin-left: auto; display: flex; }
  .view button { width: 28px; height: 17px; }
  .view .on { background: #c8c8c8; }
  .zoom { width: 14px; height: 17px; }
  input { width: 82px; height: 17px; background: linear-gradient(#bbb, #bbb) center / 100% 1px no-repeat; }
  input::-webkit-slider-thumb { appearance: none; width: 4px; height: 10px; background: #666; }
  output { width: 31px; text-align: right; font-size: 11px; color: #444; }
`, `
  <span>就绪</span><button class="macro" aria-label="录制宏">${ic('macro')}</button>
  <div class="view"><button class="on" aria-label="普通">${ic('vnormal')}</button><button aria-label="页面布局">${ic('vlayout')}</button><button aria-label="分页预览">${ic('vbreak')}</button></div>
  <button class="zoom" aria-label="缩小">${ic('minus')}</button><input type="range" min="0" max="200" value="100" aria-label="缩放级别"><button class="zoom" aria-label="放大">${ic('zplus')}</button><output>100%</output>`);

define('task-bar', `
  :host { display: flex; align-items: stretch; height: 33px; background: #060a14; color: #eee; }
  .pin { width: 41px; }
  .app { width: 127px; justify-content: flex-start; gap: 3px; padding-left: 5px; margin-right: 7px; border-bottom: 2px solid #76a9dc; }
  .app ui-icon { width: 20px; justify-content: center; }
  .first { margin-left: 5px; }
  .rec { width: 133px; padding-left: 9px; margin-left: -4px; background: #3c3e47; }
  .tray { display: flex; align-items: center; margin-left: auto; }
  .tray button { width: 20px; height: 33px; }
  .ime { width: 13px; height: 13px; line-height: 12px; background: #eee; color: #111; text-align: center; }
  time { display: block; width: 66px; text-align: center; line-height: 15px; }
  .edge { width: 4px; height: 33px; border-left: 1px solid #555; }
`, `
  <button class="pin" aria-label="开始">${ic('win')}</button><button class="pin" aria-label="任务视图">${ic('taskview')}</button><button class="pin" aria-label="应用商店">${ic('store')}</button><button class="pin" aria-label="浏览器">${ic('edge')}</button>
  <button class="app first">${ic('folder')}9.MID函数</button><button class="app">${ic('camg')}Camtasia 9</button><button class="app">${ic('xl')}9.MID函数 - Excel</button><button class="app rec">${ic('camr')}录制中...</button>
  <div class="tray">
    <button aria-label="显示隐藏的图标">${ic('tup')}</button><button aria-label="安全卫士">${ic('guard')}</button><button aria-label="电源">${ic('battery')}</button><button aria-label="网络">${ic('wifi')}</button><button aria-label="音量">${ic('sound')}</button>
    <button>中</button><button style="width:28px"><span class="ime">五</span></button>
    <time datetime="2018-09-22T22:36">22:36<br>2018/9/22</time>
    <button style="width:38px;padding-right:10px" aria-label="操作中心">${ic('action')}</button><span class="edge"></span>
  </div>`);

define('excel-app', `
  :host { display: flex; flex-direction: column; min-height: 100vh; overflow: hidden; }
`, `<title-bar></title-bar><ribbon-tabs></ribbon-tabs><excel-ribbon></excel-ribbon><formula-bar></formula-bar><sheet-grid></sheet-grid><sheet-tabs></sheet-tabs><status-bar></status-bar><task-bar></task-bar>`);
</script>
</body>
</html>
